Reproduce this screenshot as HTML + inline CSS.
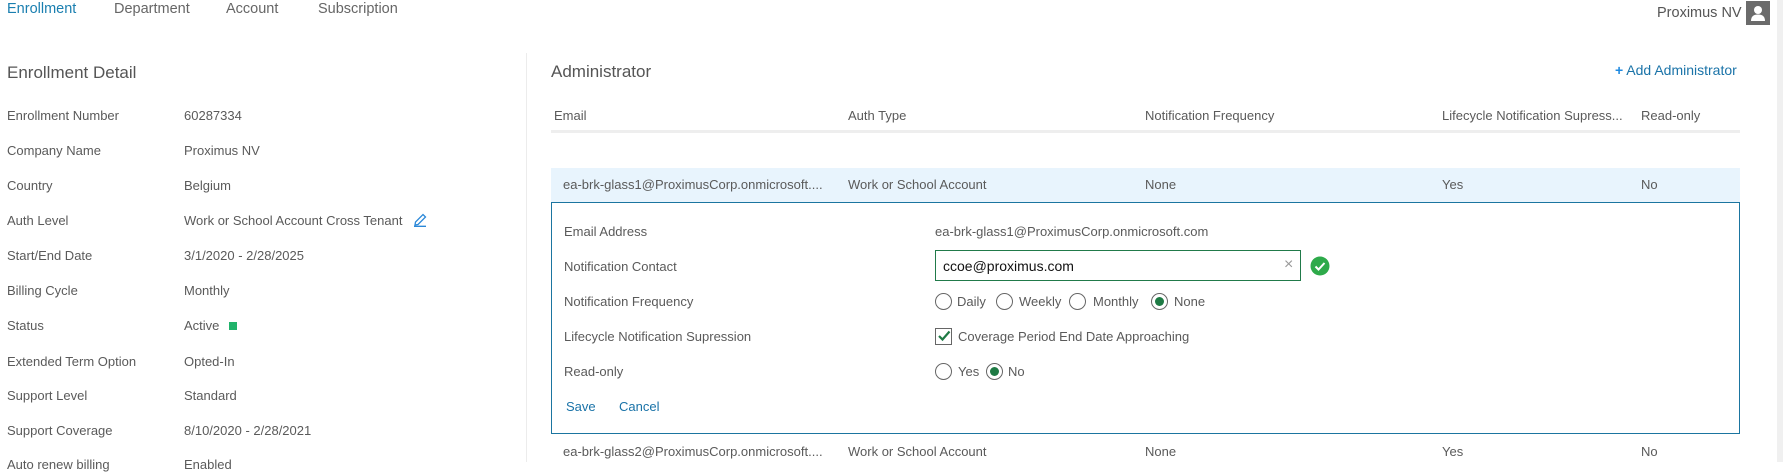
<!DOCTYPE html>
<html><head><meta charset="utf-8"><style>
*{margin:0;padding:0;box-sizing:border-box}
body{width:1783px;height:462px;overflow:hidden;background:#fff;font-family:"Liberation Sans",sans-serif;font-size:13px;color:#5a5a5a;position:relative}
.a{position:absolute;white-space:nowrap;line-height:16px}
.nav{font-size:14.5px;color:#666;top:1px}
.lbl{left:7px}.val{left:184px}
.blue{color:#1a73a8}
.rad{position:absolute;width:17px;height:17px;border:1px solid #666;border-radius:50%;background:#fff}
.rad.on::after{content:"";position:absolute;left:3px;top:3px;width:9px;height:9px;border-radius:50%;background:#1e7a44}
</style></head><body>
<div class="a nav" style="left:7px;color:#1a7fb0">Enrollment</div>
<div class="a nav" style="left:114px">Department</div>
<div class="a nav" style="left:226px">Account</div>
<div class="a nav" style="left:318px">Subscription</div>
<div class="a" style="left:1657px;top:5px;font-size:14.5px;color:#555">Proximus NV</div>
<div class="a" style="left:1746px;top:1px;width:24px;height:24px;background:#6b6b6b">
<svg width="24" height="24" viewBox="0 0 24 24"><circle cx="12" cy="9" r="4" fill="#fff"/><path d="M5 20 Q5 13.5 12 13.5 Q19 13.5 19 20Z" fill="#fff"/></svg></div>
<div style="position:absolute;left:1777px;top:0;width:6px;height:462px;background:#f0f0f0"></div>

<div class="a" style="left:7px;top:63px;font-size:17px;line-height:20px;color:#555">Enrollment Detail</div>
<div class="a lbl" style="top:108px">Enrollment Number</div><div class="a val" style="top:108px">60287334</div>
<div class="a lbl" style="top:143px">Company Name</div><div class="a val" style="top:143px">Proximus NV</div>
<div class="a lbl" style="top:178px">Country</div><div class="a val" style="top:178px">Belgium</div>
<div class="a lbl" style="top:213px">Auth Level</div><div class="a val" style="top:213px">Work or School Account Cross Tenant</div>
<svg class="a" style="left:413px;top:213px" width="14" height="14" viewBox="0 0 14 14"><path d="M2 12 L2.5 9 L10 1.5 L12.5 4 L5 11.5Z M1 13.3 H13" fill="none" stroke="#2b88d8" stroke-width="1.3"/></svg>
<div class="a lbl" style="top:248px">Start/End Date</div><div class="a val" style="top:248px">3/1/2020 - 2/28/2025</div>
<div class="a lbl" style="top:283px">Billing Cycle</div><div class="a val" style="top:283px">Monthly</div>
<div class="a lbl" style="top:318px">Status</div><div class="a val" style="top:318px">Active</div>
<div style="position:absolute;left:229px;top:322px;width:8px;height:8px;background:#21b36b"></div>
<div class="a lbl" style="top:354px">Extended Term Option</div><div class="a val" style="top:354px">Opted-In</div>
<div class="a lbl" style="top:388px">Support Level</div><div class="a val" style="top:388px">Standard</div>
<div class="a lbl" style="top:423px">Support Coverage</div><div class="a val" style="top:423px">8/10/2020 - 2/28/2021</div>
<div class="a lbl" style="top:457px">Auto renew billing</div><div class="a val" style="top:457px">Enabled</div>

<div style="position:absolute;left:526px;top:53px;width:1px;height:409px;background:#ececec"></div>
<div class="a" style="left:551px;top:62px;font-size:17px;line-height:20px;color:#555">Administrator</div>
<div class="a" style="left:1615px;top:62px;font-size:14px;color:#1a73a8"><span style="color:#1f8ae0;font-weight:bold">+</span> Add Administrator</div>

<div class="a" style="left:554px;top:108px">Email</div>
<div class="a" style="left:848px;top:108px">Auth Type</div>
<div class="a" style="left:1145px;top:108px">Notification Frequency</div>
<div class="a" style="left:1442px;top:108px">Lifecycle Notification Supress...</div>
<div class="a" style="left:1641px;top:108px">Read-only</div>
<div style="position:absolute;left:551px;top:130px;width:1189px;height:3px;background:#eeeeee"></div>

<div style="position:absolute;left:551px;top:168px;width:1189px;height:34px;background:#e8f4fd"></div>
<div class="a" style="left:563px;top:177px">ea-brk-glass1@ProximusCorp.onmicrosoft....</div>
<div class="a" style="left:848px;top:177px">Work or School Account</div>
<div class="a" style="left:1145px;top:177px">None</div>
<div class="a" style="left:1442px;top:177px">Yes</div>
<div class="a" style="left:1641px;top:177px">No</div>

<div style="position:absolute;left:551px;top:202px;width:1189px;height:232px;border:1.5px solid #1b75a0"></div>
<div class="a" style="left:564px;top:224px">Email Address</div>
<div class="a" style="left:935px;top:224px">ea-brk-glass1@ProximusCorp.onmicrosoft.com</div>
<div class="a" style="left:564px;top:259px">Notification Contact</div>
<div style="position:absolute;left:935px;top:250px;width:366px;height:31px;border:1px solid #217a4a"></div>
<div class="a" style="left:943px;top:258px;font-size:14px;color:#111">ccoe@proximus.com</div>
<div class="a" style="left:1284px;top:257px;font-size:16px;color:#999">×</div>
<svg class="a" style="left:1310px;top:256px" width="20" height="20" viewBox="0 0 20 20"><circle cx="10" cy="10" r="9.5" fill="#2eaa4a"/><path d="M5.5 10.5 L8.5 13.5 L14.5 7" fill="none" stroke="#fff" stroke-width="2"/></svg>
<div class="a" style="left:564px;top:294px">Notification Frequency</div>
<div class="rad" style="left:935px;top:293px"></div><div class="a" style="left:957px;top:294px">Daily</div>
<div class="rad" style="left:996px;top:293px"></div><div class="a" style="left:1019px;top:294px">Weekly</div>
<div class="rad" style="left:1069px;top:293px"></div><div class="a" style="left:1093px;top:294px">Monthly</div>
<div class="rad on" style="left:1151px;top:293px"></div><div class="a" style="left:1174px;top:294px">None</div>
<div class="a" style="left:564px;top:329px">Lifecycle Notification Supression</div>
<div style="position:absolute;left:935px;top:328px;width:17px;height:17px;border:1px solid #666;background:#fff"></div>
<svg class="a" style="left:937px;top:329px" width="14" height="14" viewBox="0 0 14 14"><path d="M2 7 L5.5 10.5 L12.5 2.5" fill="none" stroke="#1e7a44" stroke-width="2.2"/></svg>
<div class="a" style="left:958px;top:329px">Coverage Period End Date Approaching</div>
<div class="a" style="left:564px;top:364px">Read-only</div>
<div class="rad" style="left:935px;top:363px"></div><div class="a" style="left:958px;top:364px">Yes</div>
<div class="rad on" style="left:986px;top:363px"></div><div class="a" style="left:1008px;top:364px">No</div>
<div class="a blue" style="left:566px;top:399px">Save</div>
<div class="a blue" style="left:619px;top:399px">Cancel</div>

<div class="a" style="left:563px;top:444px">ea-brk-glass2@ProximusCorp.onmicrosoft....</div>
<div class="a" style="left:848px;top:444px">Work or School Account</div>
<div class="a" style="left:1145px;top:444px">None</div>
<div class="a" style="left:1442px;top:444px">Yes</div>
<div class="a" style="left:1641px;top:444px">No</div>
</body></html>
